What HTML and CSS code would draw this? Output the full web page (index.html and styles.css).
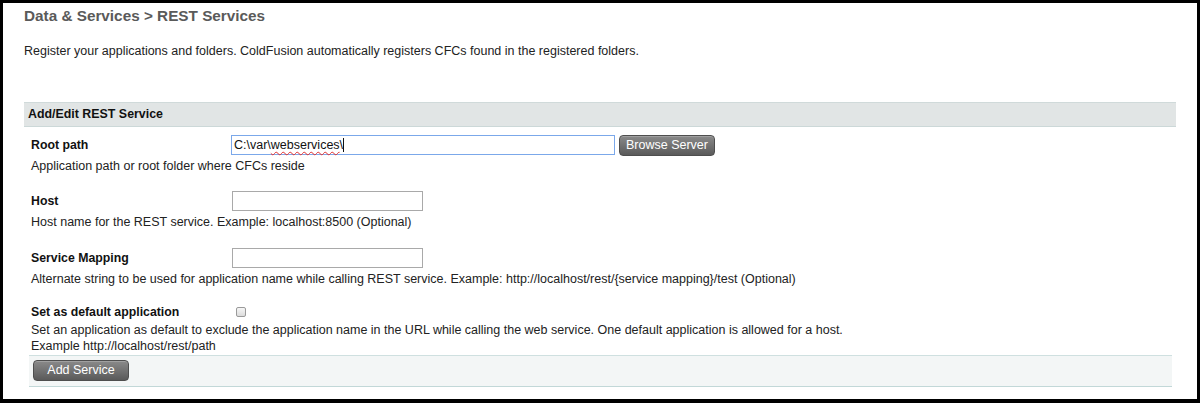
FILE: index.html
```html
<!DOCTYPE html>
<html>
<head>
<meta charset="utf-8">
<link rel="stylesheet" href="styles.css">
</head>
<body>
<div class="frame">
  <h1 class="title">Data &amp; Services &gt; REST Services</h1>
  <p class="intro">Register your applications and folders. ColdFusion automatically registers CFCs found in the registered folders.</p>
  <div class="section">
    <div class="section-head">Add/Edit REST Service</div>
    <div class="field f-root">
      <div class="row">
        <label class="label">Root path</label>
        <div class="text wide focus" role="textbox">C:\var\<span class="spell">webservices</span>\<span class="caret"></span></div>
        <button class="btn browse">Browse Server</button>
      </div>
      <div class="help">Application path or root folder where CFCs reside</div>
    </div>
    <div class="field f-host">
      <div class="row">
        <label class="label">Host</label>
        <input class="text" type="text">
      </div>
      <div class="help">Host name for the REST service. Example: localhost:8500 (Optional)</div>
    </div>
    <div class="field f-map">
      <div class="row">
        <label class="label">Service Mapping</label>
        <input class="text" type="text">
      </div>
      <div class="help">Alternate string to be used for application name while calling REST service. Example: http://localhost/rest/{service mapping}/test (Optional)</div>
    </div>
    <div class="field f-default">
      <div class="row">
        <label class="label">Set as default application</label>
        <span class="check"></span>
      </div>
      <div class="help">Set an application as default to exclude the application name in the URL while calling the web service. One default application is allowed for a host.<br>Example http://localhost/rest/path</div>
    </div>
    <div class="foot">
      <button class="btn add">Add Service</button>
    </div>
  </div>
</div>
</body>
</html>
```
FILE: styles.css
```css
html, body {
  margin: 0;
  padding: 0;
  background: #000;
}
.frame {
  box-sizing: border-box;
  width: 1200px;
  height: 403px;
  background: #fff;
  border: 3px solid #000;
  border-bottom-width: 4px;
  padding: 0 21px;
  font-family: "Liberation Sans", Arial, sans-serif;
  color: #222;
  font-size: 12.5px;
  overflow: hidden;
}
.title {
  margin: 0;
  padding-top: 4px;
  font-size: 15.3px;
  line-height: 18px;
  font-weight: bold;
  color: #5a5a5a;
}
.intro {
  margin: 0;
  padding-top: 19px;
  font-size: 12.5px;
  line-height: 15px;
  color: #222;
}
.section {
  margin-top: 43px;
  width: 1152px;
}
.section-head {
  box-sizing: border-box;
  height: 25px;
  background: #e1e5e5;
  border-top: 1px solid #d0dada;
  border-bottom: 1px solid #ccd8d8;
  padding: 4px 0 0 4px;
  font-weight: bold;
  font-size: 12.4px;
  line-height: 15px;
  color: #111;
}
.field {
  padding-left: 7px;
}
.row {
  display: flex;
  align-items: center;
  height: 20px;
}
.label {
  width: 201px;
  font-weight: bold;
  font-size: 12.3px;
  color: #111;
}
.text {
  box-sizing: border-box;
  width: 191px;
  height: 20px;
  margin: 0;
  border: 1px solid #a9a9a9;
  padding: 0 2px;
  font-family: "Liberation Sans", Arial, sans-serif;
  font-size: 12.5px;
  line-height: 18px;
  color: #111;
  background: #fff;
  outline: none;
}
.text.wide {
  width: 384px;
  margin-left: -1px;
  white-space: nowrap;
}
.text.focus {
  border-color: #7ba8ea;
}
.spell {
  text-decoration: underline wavy #e03030;
  text-decoration-thickness: 1px;
  text-underline-offset: 2px;
  text-decoration-skip-ink: none;
}
.caret {
  display: inline-block;
  width: 1px;
  height: 14px;
  background: #111;
  vertical-align: -3px;
}
.btn {
  font-family: "Liberation Sans", Arial, sans-serif;
  font-size: 12.5px;
  color: #fff;
  border: 1px solid #4e4e4e;
  border-radius: 4px;
  background: linear-gradient(#8a8a8a, #5a5a5a);
  padding: 0;
  height: 21px;
  line-height: 19px;
  box-shadow: inset 0 1px 0 rgba(255,255,255,0.2);
}
.browse {
  margin-left: 4px;
  width: 96px;
}
.help {
  margin-top: 3px;
  line-height: 16px;
  color: #222;
}
.f-root .row { margin-top: 8px; }
.f-host .row { margin-top: 17px; }
.f-map .row { margin-top: 18px; }
.f-default .row { margin-top: 15px; }
.f-default .help { margin-top: 0; }
.check {
  box-sizing: border-box;
  width: 10px;
  height: 10px;
  margin-left: 4px;
  margin-top: -1px;
  border: 1px solid #9a9a9a;
  border-radius: 2px;
  background: linear-gradient(#f6f6f6, #dcdcdc);
}
.foot {
  box-sizing: border-box;
  margin: 1px 0 0 5px;
  height: 32px;
  width: 1143px;
  background: #f3f6f6;
  border-top: 1px solid #cfe0e0;
  border-bottom: 1px solid #c2d8d8;
  padding: 4px 0 0 4px;
}
.add {
  width: 96px;
}
```
